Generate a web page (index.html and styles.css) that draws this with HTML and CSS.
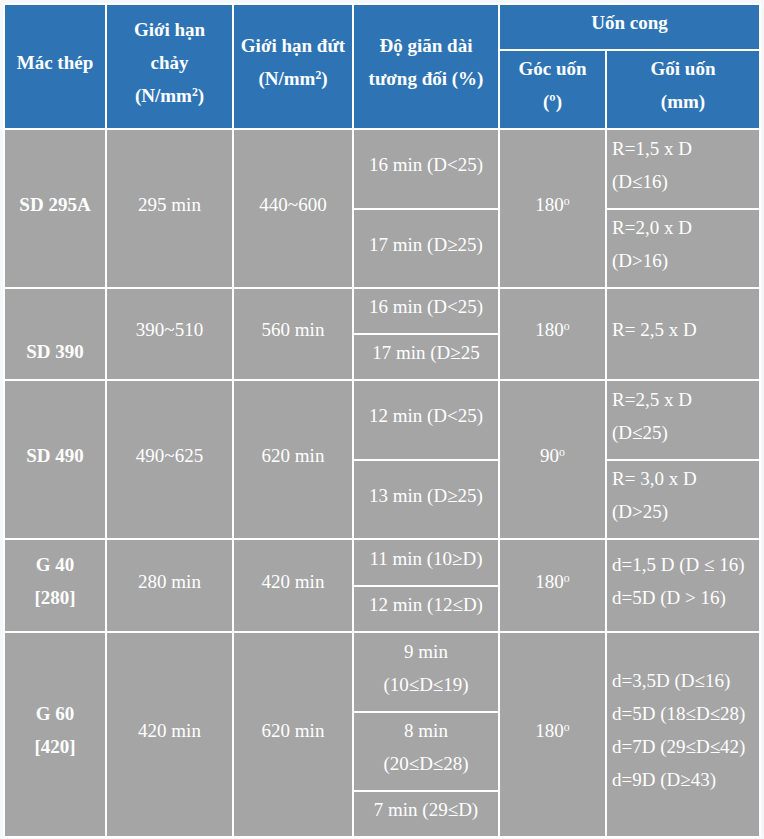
FILE: index.html
```html
<!DOCTYPE html>
<html lang="vi">
<head>
<meta charset="utf-8">
<title>Mác thép</title>
<link rel="stylesheet" href="styles.css">
</head>
<body>
<table class="spec">
  <colgroup>
    <col class="c1"><col class="c2"><col class="c3"><col class="c4"><col class="c5"><col class="c6">
  </colgroup>
  <thead>
    <tr class="r44">
      <th rowspan="2">Mác thép</th>
      <th rowspan="2">Giới hạn<br>chảy<br>(N/mm<sup>2</sup>)</th>
      <th rowspan="2">Giới hạn đứt<br>(N/mm<sup>2</sup>)</th>
      <th rowspan="2">Độ giãn dài<br>tương đối (%)</th>
      <th colspan="2">Uốn cong</th>
    </tr>
    <tr class="r77">
      <th>Góc uốn<br>(º)</th>
      <th>Gối uốn<br>(mm)</th>
    </tr>
  </thead>
  <tbody>
    <tr class="r78">
      <td rowspan="2" class="grade">SD 295A</td>
      <td rowspan="2">295 min</td>
      <td rowspan="2">440~600</td>
      <td>16 min (D&lt;25)</td>
      <td rowspan="2">180<sup>o</sup></td>
      <td class="left">R=1,5 x D<br>(D≤16)</td>
    </tr>
    <tr class="r77">
      <td>17 min (D≥25)</td>
      <td class="left">R=2,0 x D<br>(D&gt;16)</td>
    </tr>
    <tr class="r44">
      <td rowspan="2" class="grade low"><br>SD 390</td>
      <td rowspan="2">390~510</td>
      <td rowspan="2">560 min</td>
      <td>16 min (D&lt;25)</td>
      <td rowspan="2">180<sup>o</sup></td>
      <td rowspan="2" class="left">R= 2,5 x D</td>
    </tr>
    <tr class="r43">
      <td>17 min (D≥25</td>
    </tr>
    <tr class="r78">
      <td rowspan="2" class="grade">SD 490</td>
      <td rowspan="2">490~625</td>
      <td rowspan="2">620 min</td>
      <td>12 min (D&lt;25)</td>
      <td rowspan="2">90<sup>o</sup></td>
      <td class="left">R=2,5 x D<br>(D≤25)</td>
    </tr>
    <tr class="r77">
      <td>13 min (D≥25)</td>
      <td class="left">R= 3,0 x D<br>(D&gt;25)</td>
    </tr>
    <tr class="r45">
      <td rowspan="2" class="grade">G 40<br>[280]</td>
      <td rowspan="2">280 min</td>
      <td rowspan="2">420 min</td>
      <td>11 min (10≥D)</td>
      <td rowspan="2">180<sup>o</sup></td>
      <td rowspan="2" class="left">d=1,5 D (D ≤ 16)<br>d=5D (D &gt; 16)</td>
    </tr>
    <tr class="r44">
      <td>12 min (12≤D)</td>
    </tr>
    <tr class="r78">
      <td rowspan="3" class="grade">G 60<br>[420]</td>
      <td rowspan="3">420 min</td>
      <td rowspan="3">620 min</td>
      <td>9 min<br>(10≤D≤19)</td>
      <td rowspan="3">180<sup>o</sup></td>
      <td rowspan="3" class="left">d=3,5D (D≤16)<br>d=5D (18≤D≤28)<br>d=7D (29≤D≤42)<br>d=9D (D≥43)</td>
    </tr>
    <tr class="r77">
      <td>8 min<br>(20≤D≤28)</td>
    </tr>
    <tr class="r44">
      <td>7 min (29≤D)</td>
    </tr>
  </tbody>
</table>
</body>
</html>
```
FILE: styles.css
```css
html, body {
  margin: 0;
  background: #f5f7f9;
}
body {
  padding: 3px;
  font-family: "Liberation Serif", "Times New Roman", serif;
  font-size: 19px;
  color: #ffffff;
}
.spec {
  table-layout: fixed;
  width: 758px;
  border-collapse: separate;
  border-spacing: 2px;
  background: #ffffff;
}
.c1 { width: 100px; }
.c2 { width: 125px; }
.c3 { width: 118px; }
.c4 { width: 144px; }
.c5 { width: 105px; }
.c6 { width: 152px; }

.spec th,
.spec td {
  box-sizing: border-box;
  padding: 1px 4px 10px;
  line-height: 33px;
  text-align: center;
  vertical-align: middle;
  white-space: nowrap;
}
.spec th {
  background: #2e74b5;
  font-weight: bold;
}
.spec td {
  background: #a5a5a5;
  font-weight: normal;
}
.spec td.grade {
  font-weight: bold;
}
.spec td.low {
  padding-top: 6px;
  padding-bottom: 5px;
}
.spec td.left {
  text-align: left;
  padding-left: 5px;
}
sup {
  font-size: 0.62em;
  line-height: 0;
  vertical-align: 0.55em;
}
.r43 { height: 43px; }
.r44 { height: 44px; }
.r45 { height: 45px; }
.r77 { height: 77px; }
.r78 { height: 78px; }
```
